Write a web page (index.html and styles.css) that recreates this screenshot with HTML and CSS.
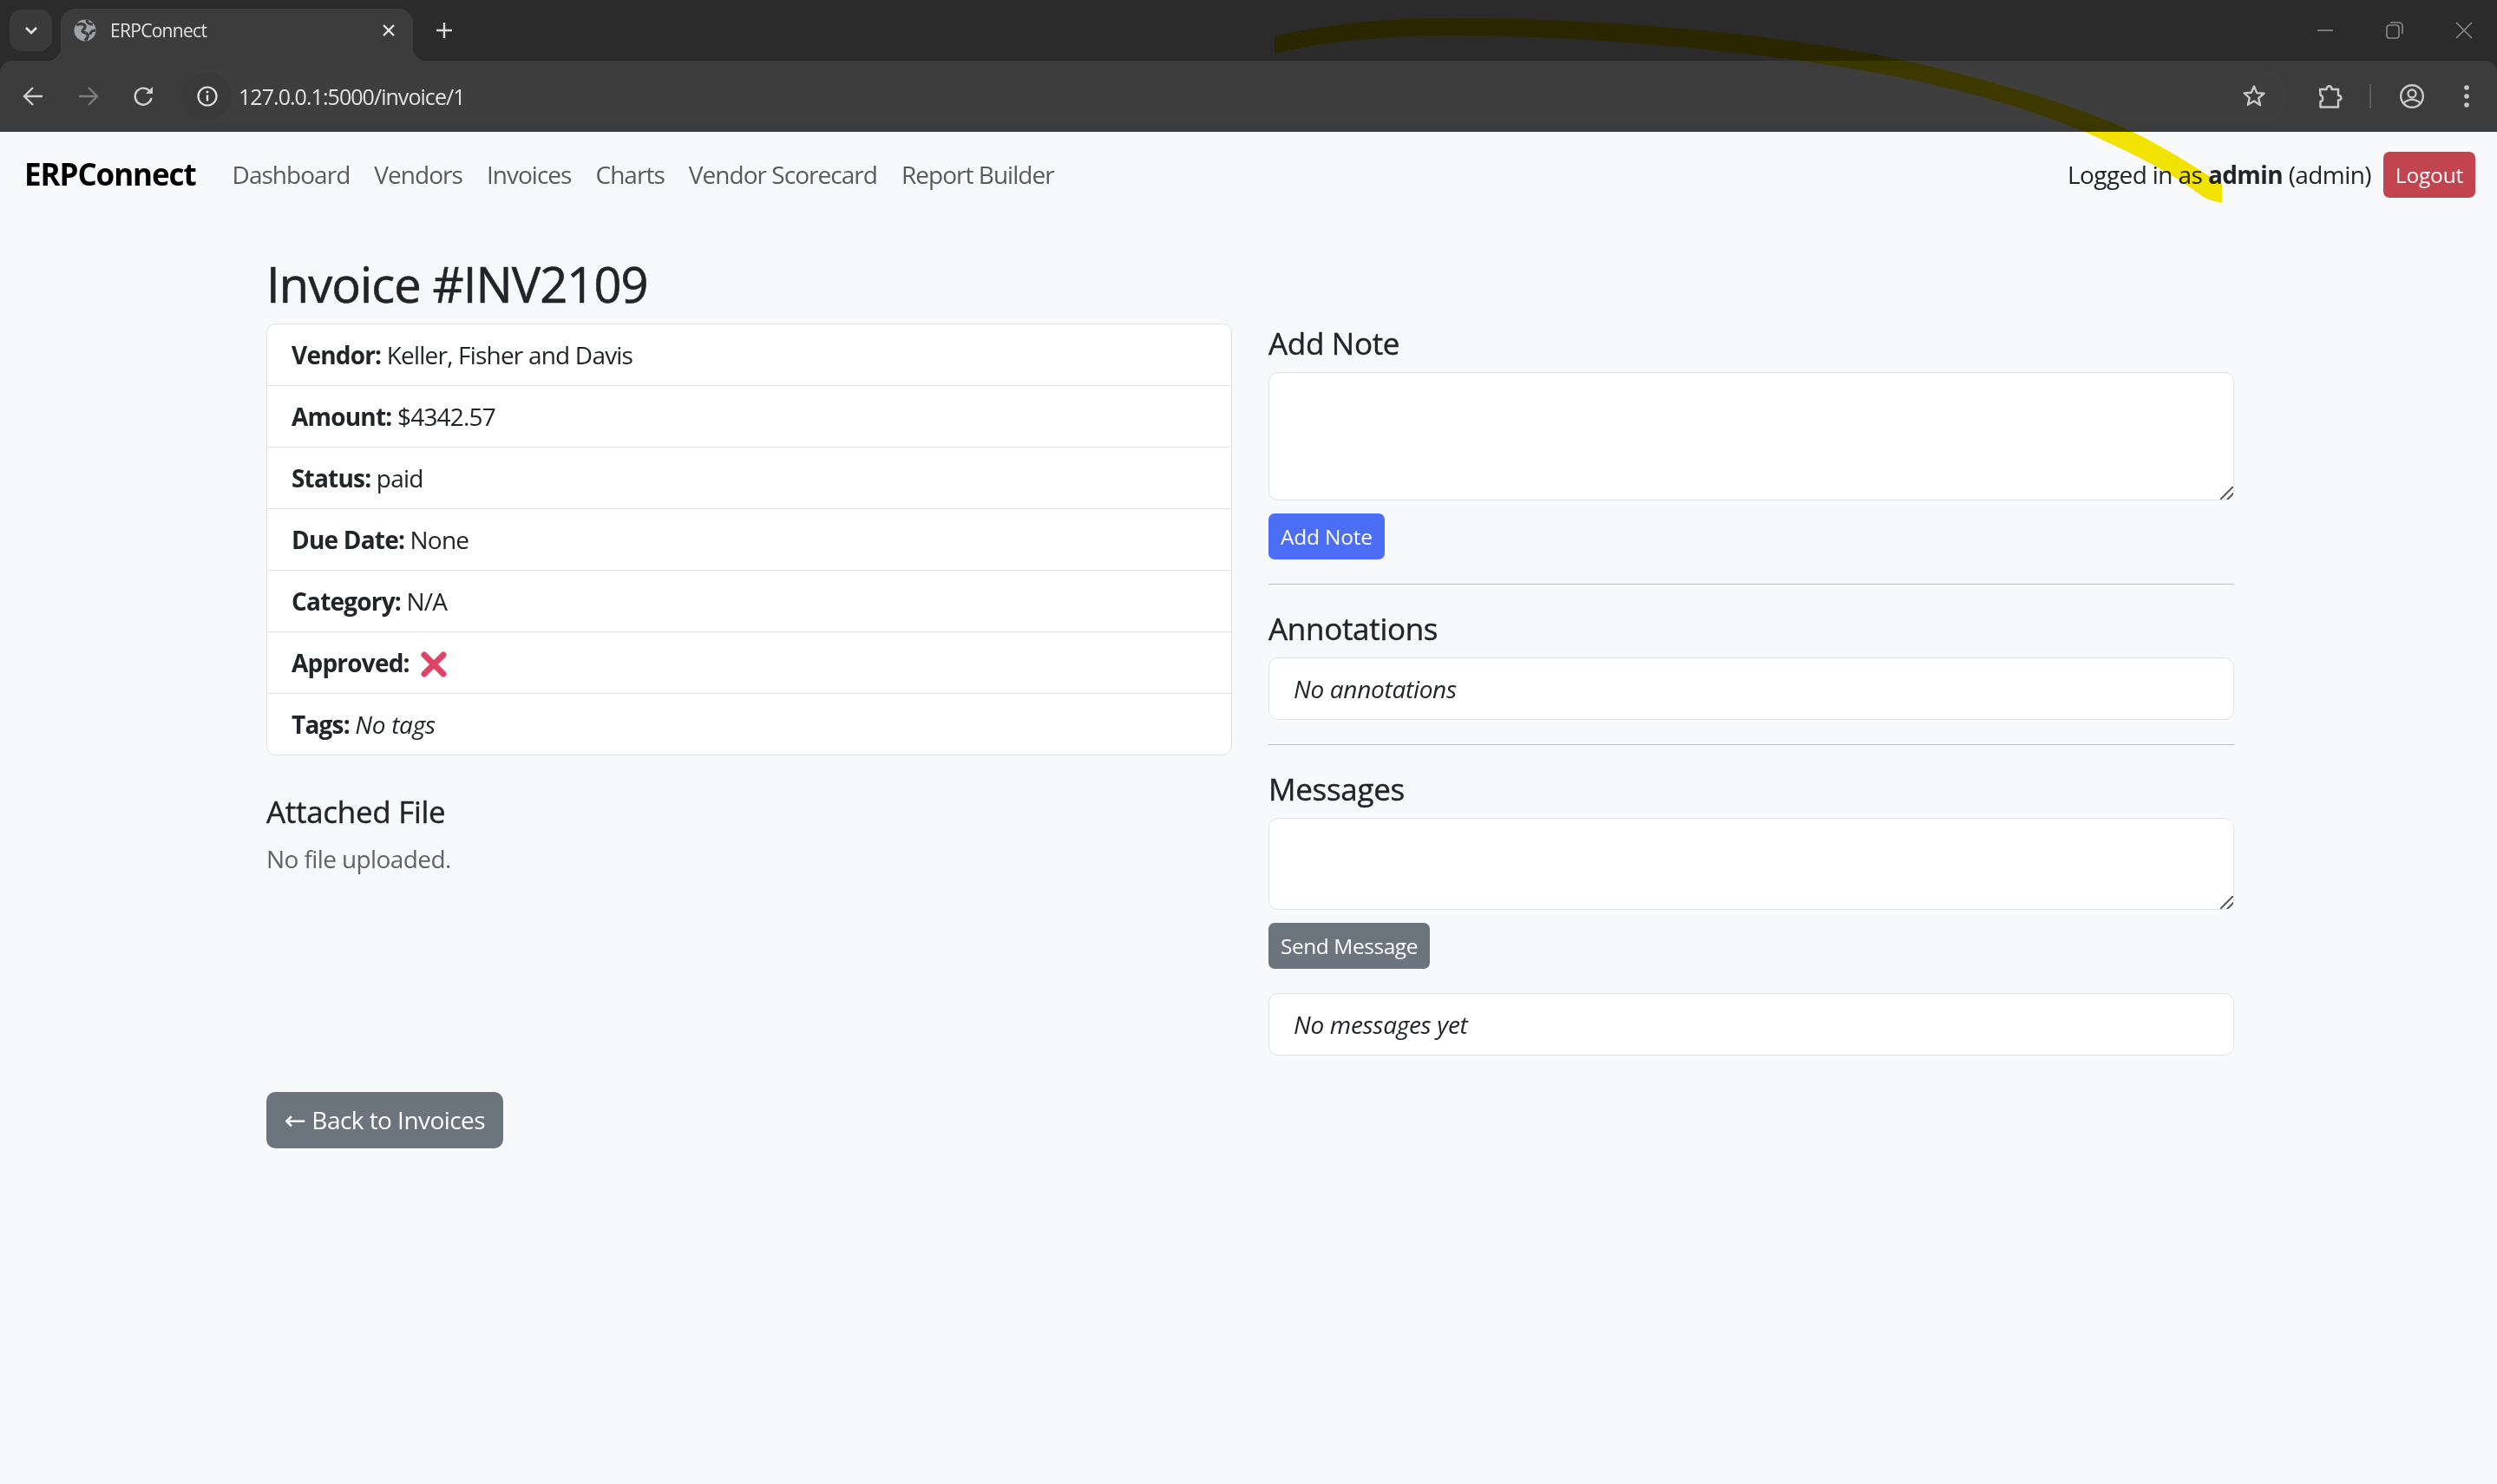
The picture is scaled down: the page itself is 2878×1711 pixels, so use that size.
FILE: index.html
```html
<!DOCTYPE html>
<html lang="en">
<head>
<meta charset="utf-8">
<title>ERPConnect</title>
<link rel="stylesheet" href="styles.css">
</head>
<body>
<header class="chrome">
  <div class="tabstrip">
    <div class="tab-search"><svg width="20" height="20" viewBox="0 0 20 20"><path d="M4 7l6 6 6-6" fill="none" stroke="#e3e3e3" stroke-width="2.6"/></svg></div>
    <div class="tab">
      <svg class="favicon" width="26" height="26" viewBox="0 0 26 26"><circle cx="13" cy="13" r="12.500" fill="#9fa3a9"/><path d="M3 7c4-2 9-2 10 1s-3 4-3 6 5 1 6 4-1 5-3 7M15 1c0 3 3 5 7 5M25 13c-3 0-6 2-6 5" fill="none" stroke="#3c3c3c" stroke-width="3.2"/></svg>
      <span class="tab-title">ERPConnect</span>
      <svg class="tab-close" width="16" height="16" viewBox="0 0 16 16"><path d="M2 2l12 12M14 2L2 14" stroke="#e8e8e8" stroke-width="2.4"/></svg>
    </div>
    <svg class="new-tab" width="20" height="20" viewBox="0 0 20 20"><path d="M10 1v18M1 10h18" stroke="#d8d8d8" stroke-width="2.4"/></svg>
    <div class="window-controls">
      <svg width="20" height="20" viewBox="0 0 20 20"><path d="M1 10h18" stroke="#8c8c8c" stroke-width="1.6"/></svg>
      <svg width="20" height="20" viewBox="0 0 20 20"><rect x="1" y="4" width="14" height="15" rx="3" fill="none" stroke="#8c8c8c" stroke-width="1.6"/><path d="M5 1h10a4 4 0 0 1 4 4v9" fill="none" stroke="#8c8c8c" stroke-width="1.6"/></svg>
      <svg width="20" height="20" viewBox="0 0 20 20"><path d="M1 1l18 18M19 1L1 19" stroke="#8c8c8c" stroke-width="1.6"/></svg>
    </div>
  </div>
  <div class="toolbar">
    <svg class="tool" width="28" height="28" viewBox="0 0 28 28"><path d="M25 14H5M14 4L4 14l10 10" fill="none" stroke="#cfcfcf" stroke-width="2.4"/></svg>
    <svg class="tool" width="28" height="28" viewBox="0 0 28 28"><path d="M3 14h20M14 4l10 10-10 10" fill="none" stroke="#7d7d7d" stroke-width="2.4"/></svg>
    <svg class="tool" width="28" height="28" viewBox="0 0 28 28"><path d="M22.5 16A9.5 9.5 0 1 1 20 7.5L23 10" fill="none" stroke="#cfcfcf" stroke-width="2.4"/><path d="M24 3v8h-8z" fill="#cfcfcf"/></svg>
    <div class="omnibox">
      <span class="info-chip"><svg width="26" height="26" viewBox="0 0 26 26"><circle cx="13" cy="13" r="10.5" fill="none" stroke="#e3e3e3" stroke-width="2.2"/><path d="M13 11.5v7" stroke="#e3e3e3" stroke-width="2.4"/><circle cx="13" cy="8" r="1.5" fill="#e3e3e3"/></svg></span>
      <span class="url">127.0.0.1:5000/invoice/1</span>
      <svg class="star" width="28" height="28" viewBox="0 0 28 28"><path d="M14 2.5l3.2 7.6 8.2.7-6.2 5.4 1.9 8L14 19.5l-7.1 4.3 1.9-8-6.2-5.4 8.2-.7z" fill="none" stroke="#c9c9c9" stroke-width="2.4" stroke-linejoin="round"/></svg>
    </div>
    <svg class="puzzle" width="30" height="30" viewBox="0 0 30 30"><path d="M3 7h7.5c0-5 6-5 6 0H24v7c4.500 0 4.500 5.500 0 5.500V27.500H3.500V21c3.500 0 3.500-7 0-7z" fill="none" stroke="#c9c9c9" stroke-width="2.4" stroke-linejoin="round"/></svg>
    <span class="divider"></span>
    <svg class="profile" width="30" height="30" viewBox="0 0 30 30"><circle cx="15" cy="15" r="12.800" fill="none" stroke="#c9c9c9" stroke-width="2.4"/><circle cx="15" cy="12" r="4.500" fill="none" stroke="#c9c9c9" stroke-width="2.400"/><path d="M5.500 23c5-5.500 14-5.500 19 0" fill="none" stroke="#c9c9c9" stroke-width="2.400"/></svg>
    <svg class="dots" width="8" height="28" viewBox="0 0 8 28"><circle cx="4" cy="4" r="2.800" fill="#c9c9c9"/><circle cx="4" cy="14" r="2.800" fill="#c9c9c9"/><circle cx="4" cy="24" r="2.800" fill="#c9c9c9"/></svg>
  </div>
</header>

<nav class="navbar">
  <a class="brand" href="#">ERPConnect</a>
  <ul class="nav-links">
    <li><a href="#">Dashboard</a></li>
    <li><a href="#">Vendors</a></li>
    <li><a href="#">Invoices</a></li>
    <li><a href="#">Charts</a></li>
    <li><a href="#">Vendor Scorecard</a></li>
    <li><a href="#">Report Builder</a></li>
  </ul>
  <span class="user">Logged in as <strong>admin</strong> (admin)</span>
  <a class="btn btn-sm btn-danger" href="#">Logout</a>
</nav>

<main class="container">
  <h2 class="title">Invoice #INV2109</h2>
  <div class="columns">
    <section>
      <ul class="list">
        <li><strong>Vendor:</strong> Keller, Fisher and Davis</li>
        <li><strong>Amount:</strong> $4342.57</li>
        <li><strong>Status:</strong> paid</li>
        <li><strong>Due Date:</strong> None</li>
        <li><strong>Category:</strong> N/A</li>
        <li><strong>Approved:</strong> <svg class="cross" width="30" height="30" viewBox="0 0 30 30"><path d="M4 4l22 22M26 4L4 26" stroke="#dd4468" stroke-width="7" stroke-linecap="round"/></svg></li>
        <li><strong>Tags:</strong> <em>No tags</em></li>
      </ul>
      <h5 class="heading attached">Attached File</h5>
      <p class="muted">No file uploaded.</p>
    </section>
    <section>
      <h5 class="heading">Add Note</h5>
      <textarea class="field note" aria-label="Add Note"></textarea>
      <a class="btn btn-sm btn-primary" href="#">Add Note</a>
      <hr>
      <h5 class="heading">Annotations</h5>
      <ul class="list"><li><em>No annotations</em></li></ul>
      <hr>
      <h5 class="heading">Messages</h5>
      <textarea class="field message" aria-label="Messages"></textarea>
      <a class="btn btn-sm btn-secondary send" href="#">Send Message</a>
      <ul class="list messages"><li><em>No messages yet</em></li></ul>
    </section>
  </div>
  <a class="btn btn-secondary back" href="#"><span class="arrow">←</span> Back to Invoices</a>
</main>

<svg class="highlighter" width="2878" height="240" viewBox="0 0 2878 240"><path d="M1469 42C1530 27 1600 21 1673 21C1860 21 2060 40 2196 70C2300 93 2400 124 2458 152C2495 170 2530 192 2561 213L2561 234C2550 232 2545 230 2538 226C2500 197 2460 178 2403 152C2300 110 2190 86 2074 70C1940 52 1800 41 1673 41C1600 41 1530 47 1469 62Z" fill="#f9e800"/></svg>
</body>
</html>
```

FILE: styles.css
```css
* { box-sizing: border-box; }
html, body { margin: 0; padding: 0; }
body {
  background: #f8f9fa;
  color: #212529;
  font-family: "Open Sans", "Noto Sans", sans-serif;
  font-size: 28px;
  line-height: 42px;
  letter-spacing: -0.8px;
  min-height: 1711px;
  position: relative;
  overflow: hidden;
}
a { text-decoration: none; color: inherit; }

/* browser chrome */
.chrome { background: #2b2b2b; height: 152px; }
.tabstrip { height: 70px; display: flex; align-items: flex-start; padding: 10px 0 0 11px; position: relative; }
.tab-search { width: 49px; height: 48px; margin-top: 1px; border-radius: 14px; background: #3a3a3a; display: flex; align-items: center; justify-content: center; }
.tab { width: 406px; height: 60px; margin-left: 10px; background: #3c3c3c; border-radius: 16px 16px 0 0; display: flex; align-items: center; padding: 0 20px 10px 15px; position: relative; }
.tab::before, .tab::after { content: ""; position: absolute; bottom: 0; width: 16px; height: 16px; }
.tab::before { left: -16px; background: radial-gradient(circle at 0 0, #2b2b2b 16px, #3c3c3c 16.5px); }
.tab::after { right: -16px; background: radial-gradient(circle at 100% 0, #2b2b2b 16px, #3c3c3c 16.5px); }
.favicon { flex: none; }
.tab-title { margin-left: 16px; font-size: 21px; line-height: 30px; color: #e3e3e3; flex: 1; letter-spacing: -0.7px; }
.tab-close { flex: none; }
.new-tab { margin: 15px 0 0 26px; flex: none; }
.window-controls { margin-left: auto; display: flex; gap: 60px; padding: 15px 28px 0 0; }
.toolbar { height: 82px; background: #3c3c3c; border-radius: 14px 14px 0 0; display: flex; align-items: center; padding: 0 31px 0 24px; }
.tool { flex: none; margin-right: 36px; }
.tool:nth-child(3) { margin-right: 31px; }
.omnibox { flex: 1; height: 60px; background: #3e3e3e; border-radius: 30px; display: flex; align-items: center; padding-right: 27px; margin-right: 32px; }
.info-chip { width: 56px; height: 56px; border-radius: 50%; background: #3a3a3a; display: flex; align-items: center; justify-content: center; flex: none; }
.url { margin-left: 8px; font-size: 25px; line-height: 30px; color: #e3e3e3; flex: 1; letter-spacing: -0.95px; }
.star { flex: none; }
.puzzle { flex: none; }
.divider { width: 2px; height: 28px; background: #5c5c5c; margin: 0 32px 0 30px; flex: none; }
.profile { flex: none; margin-right: 44px; }
.dots { flex: none; }

/* navbar */
.navbar { height: 98px; display: flex; align-items: center; padding: 0 25px 0 28px; }
.brand { font-size: 35px; font-weight: 700; color: #000; margin-right: 28px; line-height: 52px; letter-spacing: -1.1px; }
.nav-links { list-style: none; display: flex; margin: 0; padding: 0; color: #585a5c; letter-spacing: -0.97px; }
.nav-links a { display: block; padding: 0 14px; }
.user { margin-left: auto; margin-right: 14px; letter-spacing: -0.6px; }
strong { font-weight: 700; }
em { letter-spacing: -0.3px; }

/* buttons */
.btn { display: inline-block; color: #fff; text-align: center; }
.btn-sm { font-size: 24.5px; line-height: 37px; padding: 8px 14px; border-radius: 7px; letter-spacing: -0.2px; }
.btn-danger { background: #c1444e; }
.btn-primary { background: #4c6ef5; }
.btn-secondary { background: #6c757d; }
.send { letter-spacing: -0.45px; }

/* content */
.container { width: 2268px; margin: 42px 0 0 307px; }
.title { font-size: 56px; line-height: 67px; font-weight: 500; margin: 0 0 14px; padding-top: 2px; height: 67px; letter-spacing: -0.9px; -webkit-text-stroke: 0.6px #212529; }
.columns { display: grid; grid-template-columns: 1113px 1113px; column-gap: 42px; }
.columns section { min-width: 0; }
.list { list-style: none; margin: 0; padding: 0; background: #fff; border: 1px solid #dee2e6; border-radius: 10.5px; }
.list li { padding: 14px 28px; height: 70px; }
.list li + li { border-top: 1px solid #dee2e6; height: 71px; }
.cross { vertical-align: -6px; margin-left: 7px; }
.heading { font-size: 35px; line-height: 42px; height: 42px; padding-top: 2px; font-weight: 500; margin: 0 0 14px; letter-spacing: -0.3px; -webkit-text-stroke: 0.4px #212529; }
.attached { margin-top: 42px; }
.muted { margin: 0; color: #5c636a; letter-spacing: -0.6px; }
.field { display: block; width: 100%; background: #fff; border: 1px solid #dee2e6; border-radius: 10.5px; margin: 0 0 15px; padding: 10px 21px; font: inherit; }
.field::-webkit-resizer { background: linear-gradient(135deg, transparent 0 46%, #666 46% 56%, transparent 56% 72%, #666 72% 82%, transparent 82%); }
.note { height: 148px; }
.message { height: 106px; }
hr { border: 0; border-top: 1px solid #bfc0c2; margin: 28px 0; }
.messages { margin-top: 28px; }
.back { margin-top: 42px; padding: 0 21px; height: 65px; line-height: 64px; border-radius: 10.5px; letter-spacing: -0.55px; }
.arrow { font-family: "DejaVu Sans", sans-serif; font-size: 30px; line-height: 1; letter-spacing: -0.5px; }

/* screen annotation drawn over everything */
.highlighter { position: absolute; left: 0; top: 0; mix-blend-mode: multiply; pointer-events: none; }
```
